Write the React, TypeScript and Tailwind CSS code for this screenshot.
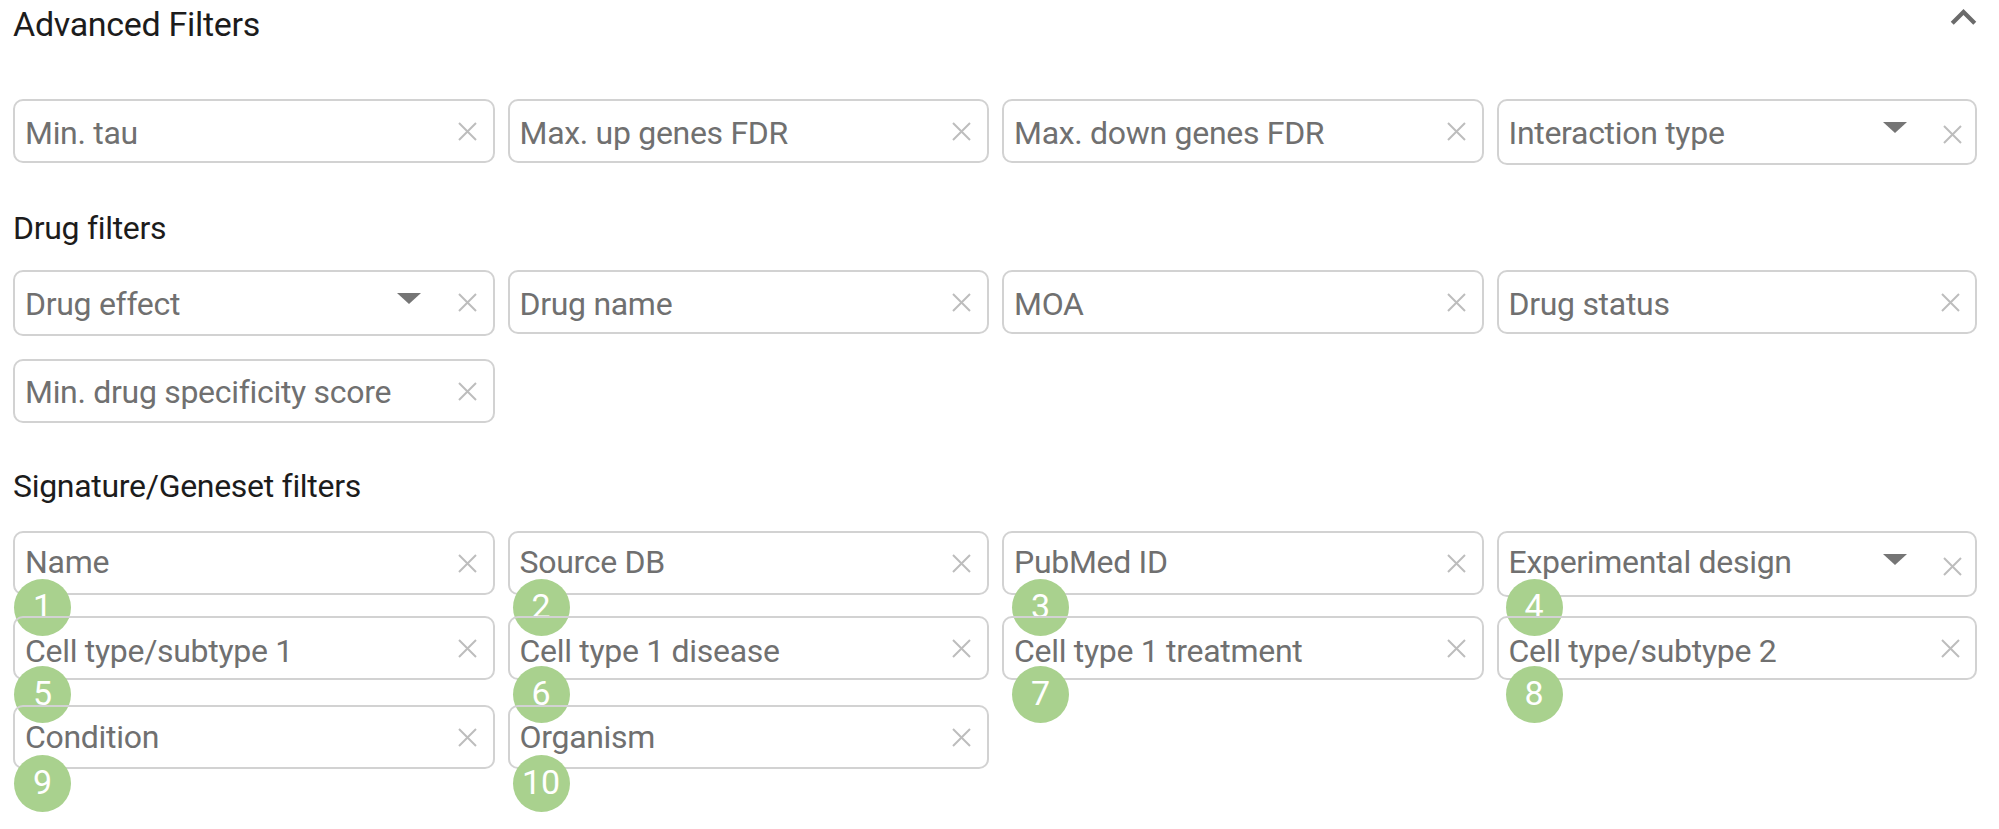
import { MdExpandLess } from "react-icons/md";

const font = { fontFamily: '"Roboto", "Liberation Sans", sans-serif' };

type FieldProps = {
    label: string;
    select?: boolean;
    wide?: boolean;
    last?: boolean;
    badge?: number;
    badgeLeft?: string;
    badgeTop?: string;
    height?: string;
    textPad?: string;
};

function ClearIcon({ className }: { className: string }) {
    return (
        <svg viewBox="0 0 19 19" className={className} fill="none" stroke="#bdbdbd" strokeWidth="2">
            <path d="M1 1 L18 18 M18 1 L1 18" />
        </svg>
    );
}

function Field({ label, select, wide, last, badge, badgeLeft, badgeTop = "top-[48px]", height = "h-[64px]", textPad = "pt-[14px]" }: FieldProps) {
    return (
        <div className={`relative flex items-start rounded-[10px] border-2 border-[#d2d2d2] pl-[10px] ${height}`}>
            <span className={`flex-1 text-[32px] leading-[36px] tracking-[-0.3px] text-[#707070] ${textPad}`}>{label}</span>
            {select ? (
                <>
                    <div className={`mt-[21px] h-0 w-0 border-x-[12px] border-t-[11px] border-x-transparent border-t-[#757575] ${wide ? "mr-[37px]" : "mr-[36px]"}`} />
                    <ClearIcon className={`h-[19px] w-[19px] ${wide ? "mt-[21px] mr-[16px]" : "mt-[24px] mr-[13px]"}`} />
                </>
            ) : (
                <ClearIcon className={`mt-[21px] h-[19px] w-[19px] ${last ? "mr-[15px]" : "mr-[16px]"}`} />
            )}
            {badge !== undefined && (
                <div className={`absolute flex h-[57px] w-[57px] items-center justify-center rounded-full bg-[#a9d18e] pb-[3px] text-[34px] leading-none text-white ${badgeLeft} ${badgeTop}`}>
                    {badge}
                </div>
            )}
        </div>
    );
}

const rowClass = "grid grid-cols-[481.5px_481.5px_481.5px_480px] items-start gap-x-[13px]";

export default function App() {
    return (
        <div className="h-[829px] w-[1999px] overflow-hidden bg-white pl-[13px]" style={font}>
            {/* Header */}
            <div className="flex h-[48px] w-[1963px] items-center justify-between">
                <h1 className="text-[34px] leading-[48px] tracking-[-0.3px] text-[#1c1c1c]">Advanced Filters</h1>
                <MdExpandLess className="mb-[14px] -mr-[13px] text-[51px] text-[#6b6b6b]" />
            </div>

            {/* Top filters */}
            <div className={`mt-[51px] ${rowClass}`}>
                <Field label="Min. tau" />
                <Field label="Max. up genes FDR" />
                <Field label="Max. down genes FDR" />
                <Field label="Interaction type" select height="h-[66px]" />
            </div>

            {/* Drug filters */}
            <h2 className="mt-[45px] text-[32px] leading-[36px] tracking-[-0.3px] text-[#1c1c1c]">Drug filters</h2>
            <div className={`mt-[24px] gap-y-[23px] ${rowClass}`}>
                <Field label="Drug effect" select wide height="h-[66px]" />
                <Field label="Drug name" />
                <Field label="MOA" />
                <Field label="Drug status" last />
                <Field label="Min. drug specificity score" textPad="pt-[13px]" />
            </div>

            {/* Signature filters */}
            <h2 className="mt-[45px] text-[32px] leading-[36px] tracking-[-0.3px] text-[#1c1c1c]">Signature/Geneset filters</h2>
            <div className={`mt-[27px] ${rowClass}`}>
                <Field label="Name" badge={1} badgeLeft="left-[-1px]" badgeTop="top-[46px]" textPad="pt-[11px]" />
                <Field label="Source DB" badge={2} badgeLeft="left-[3px]" badgeTop="top-[46px]" textPad="pt-[11px]" />
                <Field label="PubMed ID" badge={3} badgeLeft="left-[8px]" badgeTop="top-[46px]" textPad="pt-[11px]" />
                <Field label="Experimental design" select badge={4} badgeLeft="left-[7px]" badgeTop="top-[46px]" height="h-[66px]" textPad="pt-[11px]" />
            </div>
            <div className={`mt-[19px] ${rowClass}`}>
                <Field label="Cell type/subtype 1" badge={5} badgeLeft="left-[-1px]" textPad="pt-[15px]" />
                <Field label="Cell type 1 disease" badge={6} badgeLeft="left-[3px]" textPad="pt-[15px]" />
                <Field label="Cell type 1 treatment" badge={7} badgeLeft="left-[8px]" textPad="pt-[15px]" />
                <Field label="Cell type/subtype 2" last badge={8} badgeLeft="left-[7px]" textPad="pt-[15px]" />
            </div>
            <div className={`mt-[25px] ${rowClass}`}>
                <Field label="Condition" badge={9} badgeLeft="left-[-1px]" textPad="pt-[12px]" />
                <Field label="Organism" badge={10} badgeLeft="left-[3px]" textPad="pt-[12px]" />
            </div>
        </div>
    );
}
